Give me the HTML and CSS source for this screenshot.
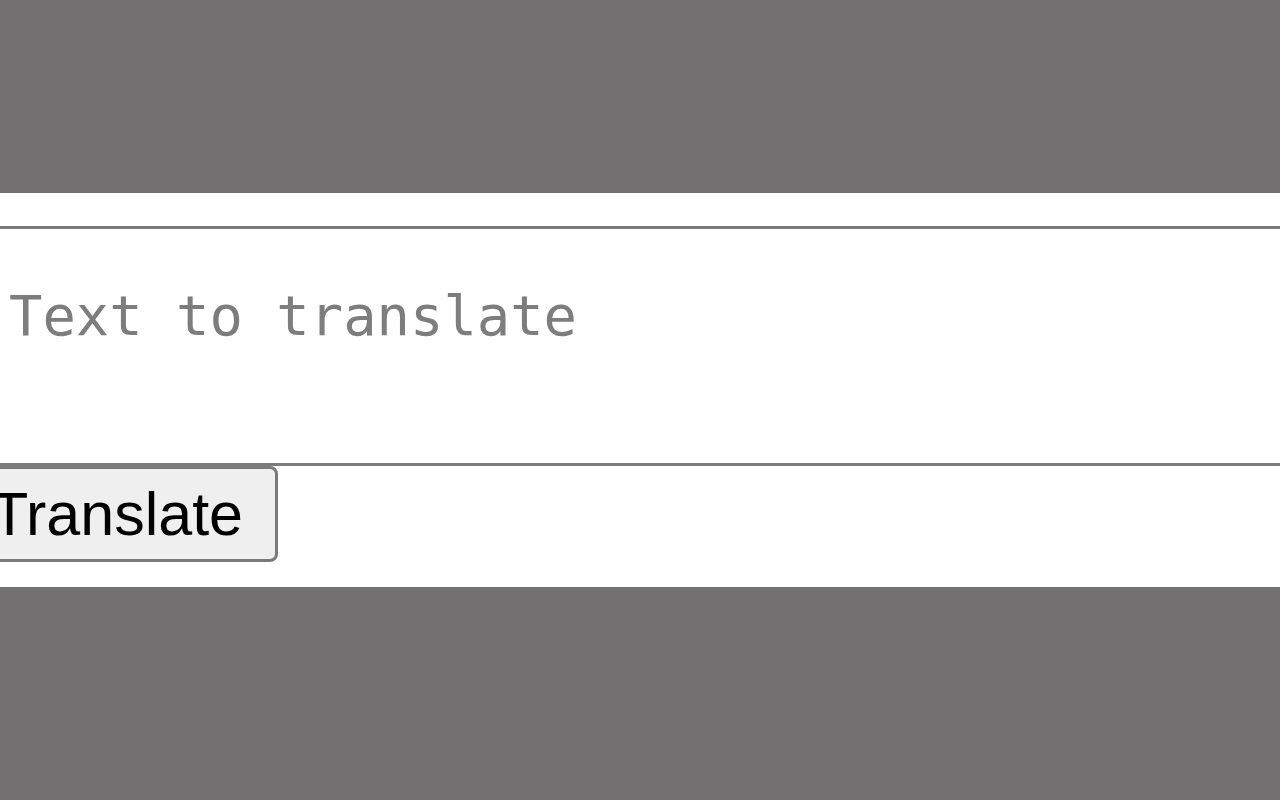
FILE: index.html
```html
<!DOCTYPE html>
<html lang="en">
<head>
  <meta charset="UTF-8">
  <meta name="viewport" content="width=device-width, initial-scale=1.0">
  <title>Translator</title>
  <link rel="stylesheet" href="styles.css">
</head>
<body>
  <div class="panel">
    <form class="translate-form" onsubmit="event.preventDefault()">
      <textarea id="source" placeholder="Text to translate"></textarea>
      <button type="submit">Translate</button>
    </form>
  </div>
</body>
</html>
```

FILE: styles.css
```css
:root {
  --backdrop: #727071;
  --border: #7a7a7a;
  --button-bg: #efefef;
}

* {
  margin: 0;
  padding: 0;
  box-sizing: border-box;
}

html, body {
  height: 100%;
  overflow: hidden;
}

body {
  background-color: var(--backdrop);
  padding-top: 193px;
}

.panel {
  background: white;
  height: 394px;
  padding-top: 33px;
}

.translate-form {
  display: flex;
  flex-direction: column;
  align-items: flex-start;
}

textarea {
  display: block;
  width: 1340px;
  height: 240px;
  margin-left: -14px;
  padding: 54px 0 0 20px;
  border: 3px solid var(--border);
  font-family: "DejaVu Sans Mono", monospace;
  font-size: 55.5px;
  resize: none;
  outline: none;
}

textarea::placeholder {
  color: #7d7d7d;
}

button {
  margin-left: -44px;
  height: 96px;
  padding: 9px 32px 10px;
  border: 3px solid var(--border);
  border-radius: 8px;
  background-color: var(--button-bg);
  font-family: "Liberation Sans", Arial, sans-serif;
  font-size: 61px;
  color: black;
  line-height: normal;
}
```
